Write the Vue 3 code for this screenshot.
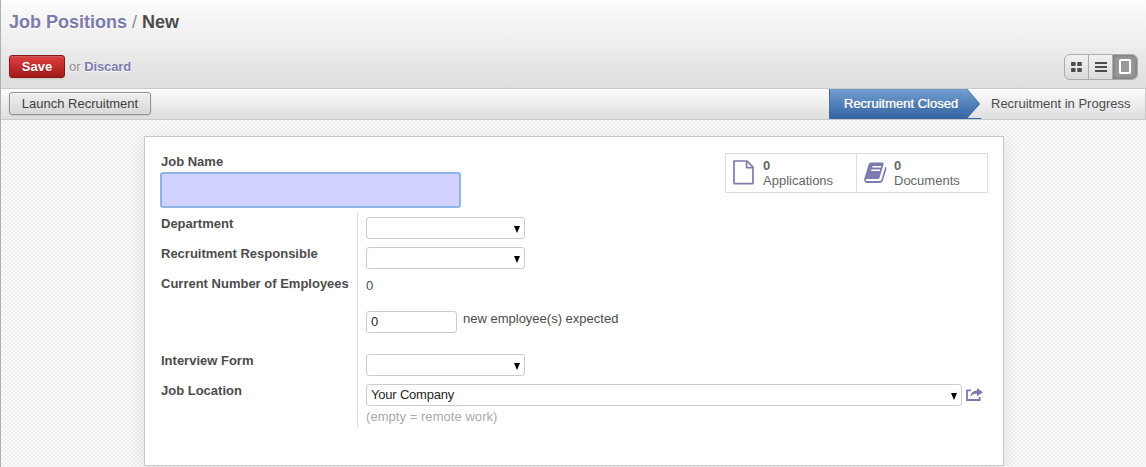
<script setup>
const views = ['kanban', 'list', 'form']
</script>

<template>
  <div class="app">
    <header class="top">
      <h1 class="crumbs"><a>Job Positions</a><span class="sep"> / </span><span>New</span></h1>
      <div class="actions">
        <button class="save">Save</button>
        <span class="or">or <a>Discard</a></span>
        <div class="views">
          <span v-for="v in views" :key="v" class="view" :class="{ on: v === 'form' }">
            <svg v-if="v === 'kanban'" width="11" height="10" viewBox="0 0 11 10">
              <g fill="#4c4c4c">
                <rect x="0" y="0" width="4.6" height="4" rx=".8" /><rect x="6.2" y="0" width="4.6" height="4" rx=".8" />
                <rect x="0" y="6" width="4.6" height="4" rx=".8" /><rect x="6.2" y="6" width="4.6" height="4" rx=".8" />
              </g>
            </svg>
            <svg v-else-if="v === 'list'" width="12" height="10" viewBox="0 0 12 10">
              <path d="M0 1h12M0 5h12M0 9h12" stroke="#4c4c4c" stroke-width="2" />
            </svg>
            <svg v-else width="12" height="15" viewBox="0 0 12 15">
              <rect x="1" y="1" width="10" height="13" rx=".6" fill="none" stroke="#fff" stroke-width="2" />
            </svg>
          </span>
        </div>
      </div>
    </header>
    <div class="statusbar">
      <button class="launch">Launch Recruitment</button>
      <div class="steps">
        <span class="step current">Recruitment Closed
          <svg class="arrow" width="15" height="30" viewBox="0 0 15 30">
            <defs>
              <linearGradient id="blue" x1="0" y1="0" x2="0" y2="1">
                <stop offset="0" stop-color="#729fcf" /><stop offset="1" stop-color="#3465a4" />
              </linearGradient>
            </defs>
            <path d="M0 0H1L14 15L1 29V30H0Z" fill="url(#blue)" />
            <path d="M1 0L13.5 15L1 29" fill="none" stroke="#3465a4" stroke-width=".8" />
            <path d="M0 29.5H15" stroke="#3465a4" />
          </svg>
        </span>
        <span class="step next">Recruitment in Progress</span>
      </div>
    </div>
    <main class="canvas">
      <section class="sheet">
        <div class="head">
          <div>
            <label class="name-label">Job Name</label>
            <div class="name-input"></div>
          </div>
          <div class="stats">
            <div class="stat">
              <svg width="21" height="25" viewBox="0 0 21 25" fill="none" stroke="#7c7bad" stroke-width="1.7" stroke-linejoin="round">
                <path d="M1 1H14L20 7V23.6H1Z" /><path d="M13.6 1V7.6H20" />
              </svg>
              <div><b>0</b><span>Applications</span></div>
            </div>
            <div class="stat">
              <svg width="23" height="22" viewBox="0 0 23 22">
                <path d="M7 .4H18.5Q20 .5 19.6 2L15.7 15.5Q15.2 17 13.7 17H2.7Q1 17.3 2 19H15.5Q17 19 17.5 17.4L21.3 4.8Q22.8 5.4 22.4 6.9L18.8 19Q18 21 16 21H3Q.8 21 .3 18.5Q0 17.3.5 16L4.8 2Q5.4.6 7 .4Z" fill="#7c7bad" />
                <path d="M8.3 4.7H17M7.3 8.2H16" stroke="#fff" stroke-width="1.4" />
              </svg>
              <div><b>0</b><span>Documents</span></div>
            </div>
          </div>
        </div>
        <div class="fields">
          <div class="labels">
            <label>Department</label>
            <label>Recruitment Responsible</label>
            <label>Current Number of Employees</label>
            <label class="late">Interview Form</label>
            <label>Job Location</label>
          </div>
          <div class="values">
            <div class="select"><i></i></div>
            <div class="select"><i></i></div>
            <div class="plain">0</div>
            <div class="expected"><div class="num">0</div><span>new employee(s) expected</span></div>
            <div class="select"><i></i></div>
            <div class="location">
              <div class="select wide"><span>Your Company</span><i></i></div>
              <svg width="17" height="13" viewBox="0 0 17 13">
                <path d="M5 2.4H1V12H13.6V9" fill="none" stroke="#7c7bad" stroke-width="1.8" />
                <path d="M11 0L17 4.3L11 8.3V5.8Q7 5.4 4.3 9Q5 3 11 2.6Z" fill="#7c7bad" />
              </svg>
            </div>
            <div class="hint">(empty = remote work)</div>
          </div>
        </div>
      </section>
    </main>
  </div>
</template>

<style>
body { margin: 0; overflow: hidden; }
</style>

<style scoped>
* { box-sizing: border-box; }
.app {
  width: 1146px; height: 467px; overflow: hidden; display: flex; flex-direction: column;
  border-left: 1px solid #afafb6; font: 13px/16px "Liberation Sans", Arial, sans-serif; color: #4c4c4c;
}
a { color: #7c7bad; }
button { font: inherit; padding: 0; margin: 0; }
.top {
  height: 89px; flex: none; padding: 11px 8px 0; background: linear-gradient(#fcfcfc, #dedede);
  border-bottom: 1px solid #cacaca; text-shadow: 0 1px 1px #fff;
}
.crumbs { margin: 0; font-size: 18px; line-height: 22px; font-weight: bold; white-space: pre; }
.sep { font-weight: normal; color: #8a8a8a; }
.actions { display: flex; margin-top: 22px; }
.save {
  width: 56px; height: 23px; border: 1px solid #8a1517; border-radius: 3px; color: #fff; font-weight: bold;
  background: linear-gradient(#df3f3f, #a21a1a); text-shadow: 0 1px 1px rgba(0, 0, 0, .2);
  box-shadow: 0 1px 2px rgba(0, 0, 0, .1), inset 0 1px 1px rgba(155, 155, 155, .4);
}
.or { color: #8a8a8a; margin: 4px 0 0 4px; }
.or a { font-weight: bold; letter-spacing: -.1px; }
.views { display: flex; margin: -1px 0 0 auto; width: 74px; height: 26px; border: 1px solid #ababab; border-radius: 6px; overflow: hidden; background: linear-gradient(#f0f0f0, #dcdcdc); }
.view { width: 24px; display: flex; align-items: center; justify-content: center; border-right: 1px solid #ababab; }
.view.on { border: 0; background: #999; box-shadow: inset 0 0 4px rgba(0, 0, 0, .3); }
.view.on svg { margin-top: -1px; }
.statusbar { height: 31px; flex: none; display: flex; padding-left: 8px; border-bottom: 1px solid #cacaca; background: linear-gradient(#fcfcfc, #dedede); }
.launch { margin-top: 3px; width: 142px; height: 23px; color: #404040; border: 1px solid #8f8f8f; border-radius: 3px; background: linear-gradient(#efefef, #d8d8d8); box-shadow: 0 1px 2px rgba(0, 0, 0, .1), inset 0 1px 1px rgba(255, 255, 255, .8); }
.steps { margin-left: auto; display: flex; line-height: 30px; border-right: 1px solid #cacaca; }
.step { position: relative; }
.current { width: 137px; padding-left: 14px; color: #fff; white-space: nowrap; background: linear-gradient(#729fcf, #3465a4); border-left: 1px solid #3d6fae; border-bottom: 1px solid #3465a4; text-shadow: 0 1px 1px rgba(0, 0, 0, .2), 0 0 1px #fff; }
.arrow { position: absolute; left: 136px; top: 0; }
.next { width: 179px; padding-left: 25px; white-space: nowrap; }
.canvas {
  flex: 1; padding: 16px 0 0 143px;
  background: repeating-conic-gradient(#efefef 0 25%, #fcfcfc 0 50%) 0 0 / 4px 4px;
}
.sheet { width: 860px; height: 330px; background: #fff; border: 1px solid #c8c8d3; box-shadow: 0 4px 20px rgba(0, 0, 0, .1); padding: 16px 15px 0 16px; }
.head { display: flex; justify-content: space-between; height: 60px; }
label { font-weight: bold; display: block; }
.name-label { margin-top: 1px; }
.name-input { margin: 2px 0 0 -1px; width: 301px; height: 36px; background: #d2d2ff; border: 2px solid #8fb4ea; border-radius: 3px; }
.stats { display: flex; width: 263px; height: 40px; border: 1px solid #dcdcdc; }
.stat { width: 130px; display: flex; padding: 7px 0 0 7px; line-height: 15px; color: #666; }
.stat svg { flex: none; margin-top: -1px; }
.stat div { margin-top: -3px; margin-left: 9px; }
.stat + .stat { width: 131px; border-left: 1px solid #dcdcdc; padding-left: 7px; }
.stat + .stat svg { margin-top: 1px; }
.stat + .stat div { margin-left: 7px; }
.stat b, .stat span { display: block; }
.fields { display: flex; }
.labels { width: 197px; height: 215px; padding-top: 3px; border-right: 1px solid #ddd; white-space: nowrap; }
.labels label { height: 30px; }
.labels .late { margin-top: 47px; }
.values { padding: 4px 0 0 8px; }
.select { width: 159px; height: 22px; margin-bottom: 8px; border: 1px solid #ccc; border-radius: 3px; background: #fff; display: flex; align-items: center; padding: 0 4px; color: #1f1f1f; }
.select span { letter-spacing: -.2px; }
.select i { margin: 3px 0 0 auto; border: 3px solid transparent; border-top: 7px solid #000; border-bottom: 0; }
.plain { height: 34px; padding-top: 1px; color: #4c4c4c; }
.expected { display: flex; height: 43px; }
.num { width: 91px; height: 22px; border: 1px solid #ccc; border-radius: 3px; padding: 2px 4px; color: #1f1f1f; }
.expected span { margin-left: 6px; }
.location { display: flex; height: 22px; }
.wide { width: 596px; margin: 0; }
.location svg { margin: 4px 0 0 4px; }
.hint { margin-top: 3px; color: #aaa; letter-spacing: .05px; }
</style>
